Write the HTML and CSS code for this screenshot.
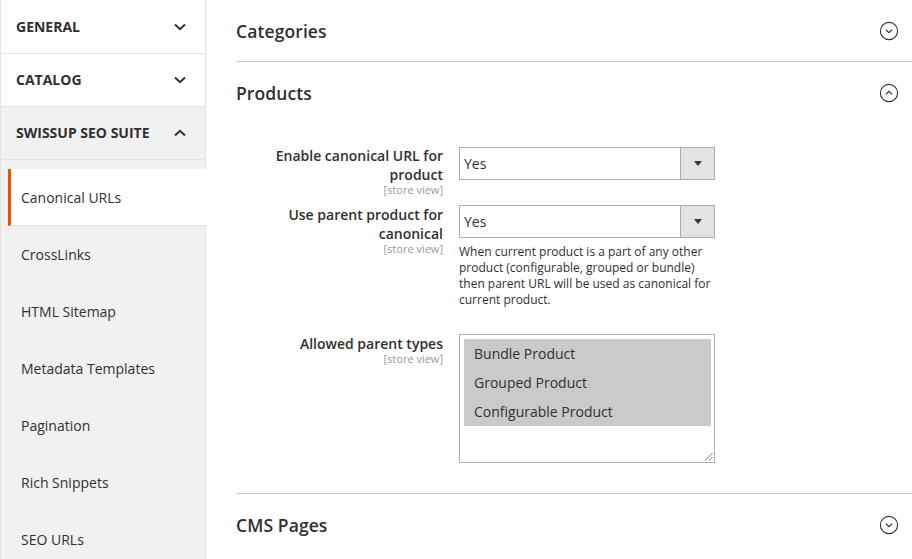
FILE: index.html
```html
<!DOCTYPE html>
<html lang="en">
<head>
<meta charset="utf-8">
<title>Configuration</title>
<link rel="stylesheet" href="styles.css">
</head>
<body>
<div class="page">
  <aside class="sidebar">
    <div class="nav-section">
      <div class="nav-title"><span>GENERAL</span>
        <svg class="chev" width="12" height="8" viewBox="0 0 12 8"><path d="M1 1.5 L6 6.2 L11 1.5" fill="none" stroke="#303030" stroke-width="2"/></svg>
      </div>
    </div>
    <div class="nav-section">
      <div class="nav-title"><span>CATALOG</span>
        <svg class="chev" width="12" height="8" viewBox="0 0 12 8"><path d="M1 1.5 L6 6.2 L11 1.5" fill="none" stroke="#303030" stroke-width="2"/></svg>
      </div>
    </div>
    <div class="nav-section open">
      <div class="nav-title"><span>SWISSUP SEO SUITE</span>
        <svg class="chev" width="12" height="8" viewBox="0 0 12 8"><path d="M1 6.5 L6 1.8 L11 6.5" fill="none" stroke="#303030" stroke-width="2"/></svg>
      </div>
      <ul class="nav-items">
        <li class="nav-item active">Canonical URLs</li>
        <li class="nav-item">CrossLinks</li>
        <li class="nav-item">HTML Sitemap</li>
        <li class="nav-item">Metadata Templates</li>
        <li class="nav-item">Pagination</li>
        <li class="nav-item">Rich Snippets</li>
        <li class="nav-item">SEO URLs</li>
      </ul>
    </div>
  </aside>

  <main class="content">
    <section class="fieldset">
      <div class="fieldset-head">
        <h2>Categories</h2>
        <svg class="toggle" width="20" height="20" viewBox="0 0 20 20"><circle cx="10" cy="10" r="8.6" fill="none" stroke="#303030" stroke-width="1.1"/><path d="M6.8 8.6 L10 11.6 L13.2 8.6" fill="none" stroke="#303030" stroke-width="1.2"/></svg>
      </div>
    </section>

    <section class="fieldset">
      <div class="fieldset-head">
        <h2>Products</h2>
        <svg class="toggle" width="20" height="20" viewBox="0 0 20 20"><circle cx="10" cy="10" r="8.6" fill="none" stroke="#303030" stroke-width="1.1"/><path d="M6.8 11.4 L10 8.4 L13.2 11.4" fill="none" stroke="#303030" stroke-width="1.2"/></svg>
      </div>
      <div class="form">
        <div class="row row-first">
          <div class="label">
            <span class="label-text">Enable canonical URL for product</span>
            <span class="scope">[store view]</span>
          </div>
          <div class="control">
            <div class="select"><span class="select-value">Yes</span><span class="select-arrow"><span class="tri"></span></span></div>
          </div>
        </div>
        <div class="row row-second">
          <div class="label">
            <span class="label-text">Use parent product for canonical</span>
            <span class="scope">[store view]</span>
          </div>
          <div class="control">
            <div class="select"><span class="select-value">Yes</span><span class="select-arrow"><span class="tri"></span></span></div>
            <p class="note">When current product is a part of any other product (configurable, grouped or bundle) then parent URL will be used as canonical for current product.</p>
          </div>
        </div>
        <div class="row row-third">
          <div class="label">
            <span class="label-text">Allowed parent types</span>
            <span class="scope">[store view]</span>
          </div>
          <div class="control">
            <div class="multiselect">
              <div class="option selected">Bundle Product</div>
              <div class="option selected">Grouped Product</div>
              <div class="option selected">Configurable Product</div>
              <svg class="grip" width="9" height="9" viewBox="0 0 9 9"><path d="M8.5 1 L1 8.5 M8.5 5 L5 8.5" stroke="#777" stroke-width="1"/></svg>
            </div>
          </div>
        </div>
      </div>
    </section>

    <section class="fieldset">
      <div class="fieldset-head">
        <h2>CMS Pages</h2>
        <svg class="toggle" width="20" height="20" viewBox="0 0 20 20"><circle cx="10" cy="10" r="8.6" fill="none" stroke="#303030" stroke-width="1.1"/><path d="M6.8 8.6 L10 11.6 L13.2 8.6" fill="none" stroke="#303030" stroke-width="1.2"/></svg>
      </div>
    </section>
  </main>
</div>
</body>
</html>
```

FILE: styles.css
```css
* { box-sizing: border-box; }

html, body {
  margin: 0;
  padding: 0;
  background: #fff;
}

body {
  font-family: "Open Sans", "Liberation Sans", Arial, sans-serif;
  color: #303030;
  font-size: 14px;
}

.page {
  display: flex;
  width: 912px;
  height: 559px;
  overflow: hidden;
}

/* Sidebar */
.sidebar {
  width: 206px;
  flex: none;
  border-left: 1px solid #e3e3e3;
  border-right: 1px solid #e3e3e3;
  padding-top: 1px;
  background: #fff;
  display: flex;
  flex-direction: column;
}

.nav-section.open {
  background: #f1f1f1;
  flex: 1;
}

.nav-title {
  height: 53px;
  border-bottom: 1px solid #e3e3e3;
  display: flex;
  align-items: center;
  justify-content: space-between;
  padding: 0 19px 1px 15px;
  font-weight: 700;
  font-size: 14px;
}

.nav-items {
  list-style: none;
  margin: 0;
  padding: 9px 0 0 0;
}

.nav-item {
  height: 57px;
  display: flex;
  align-items: center;
  margin-left: 7px;
  border-left: 3px solid transparent;
  padding-left: 10px;
  font-size: 14px;
}

.nav-item.active {
  background: #fff;
  border-left-color: #eb5202;
  margin-right: -1px;
  border-bottom: 1px solid #e3e3e3;
}

/* Content */
.content {
  flex: 1;
  padding-left: 30px;
}

.fieldset {
  border-bottom: 1px solid #cccccc;
}

.fieldset:last-child {
  border-bottom: none;
}

.fieldset-head {
  height: 61px;
  display: flex;
  align-items: center;
  justify-content: space-between;
  padding-right: 13px;
}

.fieldset-head h2 {
  margin: 0;
  font-size: 17.5px;
  font-weight: 600;
  letter-spacing: 0.1px;
}

.toggle {
  display: block;
}

.form {
  padding: 23px 0 30px 0;
}

.row {
  display: grid;
  grid-template-columns: 207px 256px;
  column-gap: 16px;
  align-items: start;
}

.row-first { margin-bottom: 10px; }
.row-first .control { padding-top: 1px; }
.row-second { margin-bottom: 26px; }

.label {
  text-align: right;
}

.label-text {
  display: block;
  font-weight: 600;
  font-size: 14px;
  line-height: 19px;
}

.scope {
  display: block;
  font-size: 11px;
  line-height: 11px;
  color: #999;
}

.select {
  height: 33px;
  border: 1px solid #adadad;
  display: flex;
  background: #fff;
}

.select-value {
  flex: 1;
  padding-left: 4px;
  line-height: 31px;
  font-size: 14px;
}

.select-arrow {
  width: 34px;
  background: #e3e3e3;
  border-left: 1px solid #adadad;
  display: flex;
  align-items: center;
  justify-content: center;
}

.tri {
  width: 0;
  height: 0;
  border-left: 4px solid transparent;
  border-right: 4px solid transparent;
  border-top: 5px solid #41362f;
  margin-left: 1px;
}

.note {
  margin: 6px 0 0 0;
  font-size: 12px;
  line-height: 16px;
}

.multiselect {
  position: relative;
  height: 129px;
  border: 1px solid #adadad;
  padding: 4px 3px 4px 4px;
}

.option {
  height: 29px;
  line-height: 29px;
  padding-left: 10px;
  font-size: 14px;
}

.option.selected {
  background: #cacaca;
}

.grip {
  position: absolute;
  right: 1px;
  bottom: 1px;
}
```
